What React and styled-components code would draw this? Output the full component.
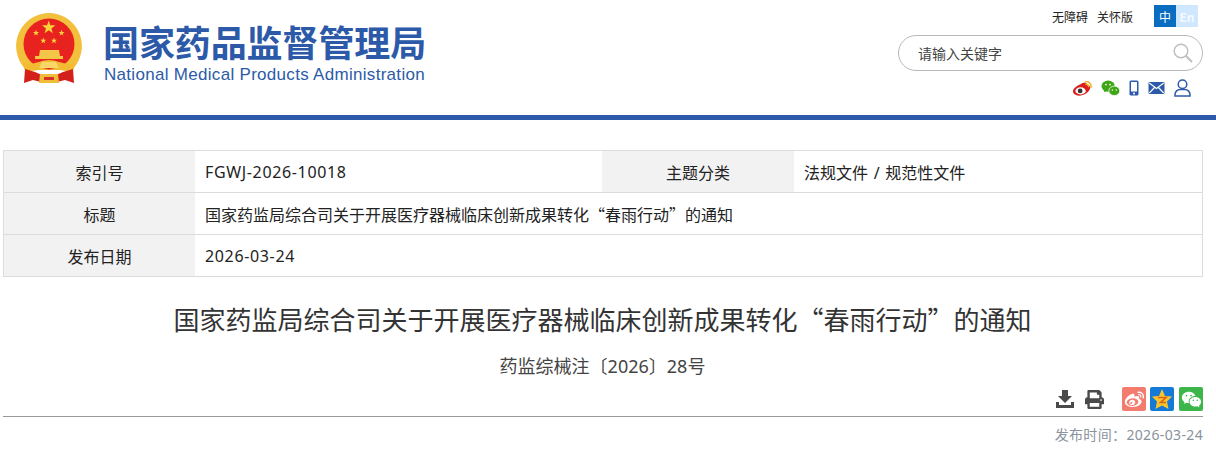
import React from "react";
import styled, { createGlobalStyle } from "styled-components";
import { RiWeiboFill, RiWechatFill } from "react-icons/ri";
import { FaPrint } from "react-icons/fa";

const GlobalStyle = createGlobalStyle`
  html, body { margin: 0; padding: 0; background: #fff; }
  body { font-family: "Noto Sans", "Noto Sans CJK SC", sans-serif; color: #333; }
  * { box-sizing: border-box; }
`;

const Page = styled.div`
  width: 1216px;
  height: 449px;
  overflow: hidden;
`;
const Header = styled.header`
  height: 120px;
  border-bottom: 5px solid #2c5aa8;
  display: flex;
  justify-content: space-between;
  padding: 12px 18px 0 16px;
`;
const Brand = styled.div`
  display: flex;
  gap: 22px;
`;
const BrandText = styled.div`
  display: flex;
  flex-direction: column;
  color: #2c5aa8;
`;
const BrandCn = styled.div`
  font-family: "Noto Sans CJK SC", sans-serif;
  font-size: 36px;
  font-weight: 700;
  line-height: 44px;
  margin-top: 7px;
  margin-left: -1px;
  white-space: nowrap;
  letter-spacing: -0.1px;
`;
const BrandEn = styled.div`
  font-family: "Liberation Sans", sans-serif;
  font-size: 17px;
  line-height: 20px;
  margin-top: 2px;
  letter-spacing: 0.3px;
  white-space: nowrap;
`;
const Tools = styled.div`
  width: 300px;
  margin-top: -7px;
  display: flex;
  flex-direction: column;
  align-items: flex-end;
`;
const TopLinks = styled.div`
  display: flex;
  align-items: center;
  height: 22px;
  font-family: "Noto Sans CJK SC", sans-serif;
  font-size: 12px;
  color: #222;
`;
const TopLink = styled.span`
  margin-right: ${(p) => p.$gap}px;
`;
const Lang = styled.span`
  width: 22px;
  height: 22px;
  display: flex;
  align-items: center;
  justify-content: center;
  font-size: 12px;
  font-weight: ${(p) => (p.$on ? 400 : 700)};
  background: ${(p) => (p.$on ? "#0a6cc0" : "#cfe7ff")};
  color: ${(p) => (p.$on ? "#fff" : "#f4faff")};
`;
const Search = styled.div`
  width: 305px;
  height: 36px;
  margin-top: 8px;
  margin-right: -5px;
  border: 1px solid #b8b8b8;
  border-radius: 18px;
  padding: 0 9px 0 19px;
  display: flex;
  align-items: center;
  justify-content: space-between;
  font-family: "Noto Sans CJK SC", sans-serif;
  font-size: 14px;
  color: #444;
`;
const SocialRow = styled.div`
  display: flex;
  align-items: center;
  height: 24px;
  margin-top: 5px;
  margin-right: 7px;
  gap: 9px;
`;
const Meta = styled.div`
  margin: 30px 13px 0 3px;
  border: 1px solid #dcdcdc;
  border-bottom: 0;
  font-size: 16px;
  color: #222;
`;
const Row = styled.div`
  display: grid;
  grid-template-columns: ${(p) => (p.$four ? "191px 407px 192px 1fr" : "191px 1fr")};
  height: 42px;
  border-bottom: 1px solid #dcdcdc;
`;
const Label = styled.div`
  background: #f2f2f2;
  display: flex;
  align-items: center;
  justify-content: center;
  font-family: "Noto Sans CJK SC", sans-serif;
`;
const Value = styled.div`
  display: flex;
  align-items: center;
  padding-left: 10px;
  white-space: pre;
  word-spacing: 1.5px;
  letter-spacing: ${(p) => (p.$latin ? "0.65px" : "0")};
  ${(p) => p.$cjk && `font-family: "Noto Sans CJK SC", sans-serif;`}
`;
const Title = styled.h1`
  margin: 22px 11px 0 0;
  font-family: "Noto Sans CJK SC", sans-serif;
  font-size: 26px;
  font-weight: 400;
  line-height: 40px;
  text-align: center;
  color: #333;
`;
const DocNo = styled.div`
  margin: 14px 11px 0 0;
  font-size: 18px;
  line-height: 26px;
  text-align: center;
  color: #444;
`;
const Actions = styled.div`
  margin: 8px 13px 0 3px;
  height: 30px;
  border-bottom: 1px solid #999;
  display: flex;
  justify-content: flex-end;
  align-items: flex-start;
`;
const PlainAction = styled.span`
  width: 20px;
  height: 24px;
  margin-right: ${(p) => p.$gap}px;
  display: flex;
  align-items: center;
  justify-content: center;
  color: #4a4a4a;
  font-size: 19px;
`;
const ShareBtn = styled.span`
  width: 24px;
  height: 24px;
  margin-left: ${(p) => p.$gap || 0}px;
  border-radius: 2px;
  background: ${(p) => p.$bg};
  color: #fff;
  display: flex;
  align-items: center;
  justify-content: center;
  font-size: 21px;
`;
const Published = styled.div`
  margin: 7px 13px 0 0;
  text-align: right;
  font-size: 14px;
  line-height: 22px;
  letter-spacing: 0.35px;
  color: #8a929c;
`;

function Emblem() {
  const star = (cx, cy, r) => {
    const pts = [];
    for (let i = 0; i < 10; i++) {
      const a = -Math.PI / 2 + (i * Math.PI) / 5;
      const d = i % 2 ? r * 0.4 : r;
      pts.push(`${(cx + d * Math.cos(a)).toFixed(1)},${(cy + d * Math.sin(a)).toFixed(1)}`);
    }
    return <polygon points={pts.join(" ")} fill="#fbd23b" />;
  };
  return (
    <svg width="66" height="72" viewBox="0 0 66 72">
      <path d="M33 1a33 33 0 0 1 31 44c-2 6-5 10-9 13H11C7 55 4 51 2 45A33 33 0 0 1 33 1z" fill="#f2c03c" />
      <circle cx="33" cy="32" r="25.500" fill="#e8231f" />
      {star(32.700, 15.500, 7)}
      {star(20, 21, 3.200)}
      {star(45.500, 21, 3.200)}
      {star(27.300, 28.700, 3.200)}
      {star(38, 28.700, 3.200)}
      <path d="M24 38h19l1 6h3v3H19v-3h4z" fill="#f4c648" />
      <path d="M7 50c8 5 17-2 26-2s18 7 26 2l-1 7c-7 5-18-1-25-1s-18 6-25 1z" fill="#f2bb32" />
      <path d="M26 50h14l3 6H23z" fill="#f8d668" />
      <path d="M9 57l10 3 7 3-1 7-8-2-9 3z" fill="#d3201b" />
      <path d="M57 57l-10 3-7 3 1 7 8-2 9 3z" fill="#d3201b" />
      <path d="M24 62h18l1 9H23z" fill="#f0bd3a" />
      <path d="M28 65h10v3H28z" fill="#d9302a" />
    </svg>
  );
}

function SearchIcon() {
  return (
    <svg width="20" height="20" viewBox="0 0 20 20" fill="none" stroke="#bdbdbd" strokeWidth="1.400">
      <circle cx="8" cy="8" r="6.800" />
      <path d="M13 13l6 6" strokeWidth="2" />
    </svg>
  );
}

function WeiboColor() {
  return (
    <svg width="19" height="17" viewBox="1 1 20 17">
      <path d="M9 5c3-2 6-2 6.500 0 .2 1-.2 1.600 1 1.400 2.600 0 3.400 2 2.200 4C17 14 12.500 17 7.500 17 3.500 17 1 15 1 12.500 1 10 4 7 9 5z" fill="#dd1c1c" />
      <ellipse cx="9" cy="12" rx="5.500" ry="3.700" fill="#fff" />
      <circle cx="8.500" cy="12" r="2.500" fill="#333" />
      <path d="M14 2.500c3-1 6.500 1.500 6 5.500M14.500 5c1.500-.5 3.300 1 3 2.500" fill="none" stroke="#f0a81c" strokeWidth="1.500" strokeLinecap="round" />
    </svg>
  );
}

function WechatColor() {
  return (
    <svg width="19" height="17" viewBox="0 0 20 18">
      <ellipse cx="7.500" cy="6.500" rx="7" ry="6" fill="#3fa617" />
      <path d="M3.500 10l-.5 3 3-1.500z" fill="#3fa617" />
      <ellipse cx="14" cy="11.500" rx="5.800" ry="5" fill="#3fa617" stroke="#fff" strokeWidth=".8" />
      <circle cx="5.200" cy="4.800" r=".9" fill="#fff" />
      <circle cx="9.500" cy="4.800" r=".9" fill="#fff" />
      <circle cx="12" cy="10.500" r=".8" fill="#fff" />
      <circle cx="16" cy="10.500" r=".8" fill="#fff" />
    </svg>
  );
}

function PhoneIcon() {
  return (
    <svg width="10" height="16" viewBox="0 0 10 16">
      <rect x="0.500" y="0.500" width="9" height="15" rx="1.500" fill="#2c5aa8" />
      <rect x="2" y="2" width="6" height="9.500" fill="#fff" />
      <circle cx="5" cy="13.400" r="1" fill="#fff" />
    </svg>
  );
}

function MailIcon() {
  return (
    <svg width="17" height="12" viewBox="0 0 16 12">
      <rect width="16" height="12" rx="1" fill="#2c5aa8" />
      <path d="M0.800 1l7.200 5.500L15.200 1M0.800 11l5.200-5.500M15.200 11L10 5.500" fill="none" stroke="#fff" strokeWidth="1.100" />
    </svg>
  );
}

function UserIcon() {
  return (
    <svg width="17" height="18" viewBox="0 0 17 18" fill="none" stroke="#2c5aa8" strokeWidth="1.500">
      <circle cx="8.500" cy="5.200" r="4.300" />
      <path d="M1 17v-1.500C1 12.500 3.500 10.500 6 10.500h5c2.500 0 5 2 5 5V17z" />
    </svg>
  );
}

function DownloadIcon() {
  return (
    <svg width="18" height="18" viewBox="0 0 18 18" fill="#4a4a4a">
      <path d="M6 0h6v6h4l-7 7-7-7h4z" />
      <path d="M0 12h3v3h12v-3h3v6H0z" />
    </svg>
  );
}

function QzoneIcon() {
  return (
    <svg width="24" height="24" viewBox="0 0 24 24">
      <rect width="24" height="24" rx="2" fill="#1479d7" />
      <polygon points="12,2 15,9 22,9.500 17,14.500 18.500,22 12,18.500 5.500,22 7,14.500 2,9.500 9,9" fill="#fcc32a" />
      <path d="M8 10.500h8l-5.500 5H16" fill="none" stroke="#d9641c" strokeWidth="1.600" />
    </svg>
  );
}

export default function App() {
  return (
    <Page>
      <GlobalStyle />
      <Header>
        <Brand>
          <Emblem />
          <BrandText>
            <BrandCn>国家药品监督管理局</BrandCn>
            <BrandEn>National Medical Products Administration</BrandEn>
          </BrandText>
        </Brand>
        <Tools>
          <TopLinks>
            <TopLink $gap={9}>无障碍</TopLink>
            <TopLink $gap={21}>关怀版</TopLink>
            <Lang $on>中</Lang>
            <Lang>En</Lang>
          </TopLinks>
          <Search>
            <span>请输入关键字</span>
            <SearchIcon />
          </Search>
          <SocialRow>
            <WeiboColor />
            <WechatColor />
            <PhoneIcon />
            <MailIcon />
            <UserIcon />
          </SocialRow>
        </Tools>
      </Header>
      <Meta>
        <Row $four>
          <Label>索引号</Label>
          <Value $latin>FGWJ-2026-10018</Value>
          <Label>主题分类</Label>
          <Value>法规文件 / 规范性文件</Value>
        </Row>
        <Row>
          <Label>标题</Label>
          <Value $cjk>国家药监局综合司关于开展医疗器械临床创新成果转化“春雨行动”的通知</Value>
        </Row>
        <Row>
          <Label>发布日期</Label>
          <Value $latin>2026-03-24</Value>
        </Row>
      </Meta>
      <Title>国家药监局综合司关于开展医疗器械临床创新成果转化“春雨行动”的通知</Title>
      <DocNo>药监综械注〔2026〕28号</DocNo>
      <Actions>
        <PlainAction $gap={9}><DownloadIcon /></PlainAction>
        <PlainAction $gap={18}><FaPrint /></PlainAction>
        <ShareBtn $bg="#f47c6f"><RiWeiboFill /></ShareBtn>
        <ShareBtn $gap={4} $bg="transparent"><QzoneIcon /></ShareBtn>
        <ShareBtn $gap={5} $bg="#3cb64a"><RiWechatFill /></ShareBtn>
      </Actions>
      <Published>发布时间：2026-03-24</Published>
    </Page>
  );
}
